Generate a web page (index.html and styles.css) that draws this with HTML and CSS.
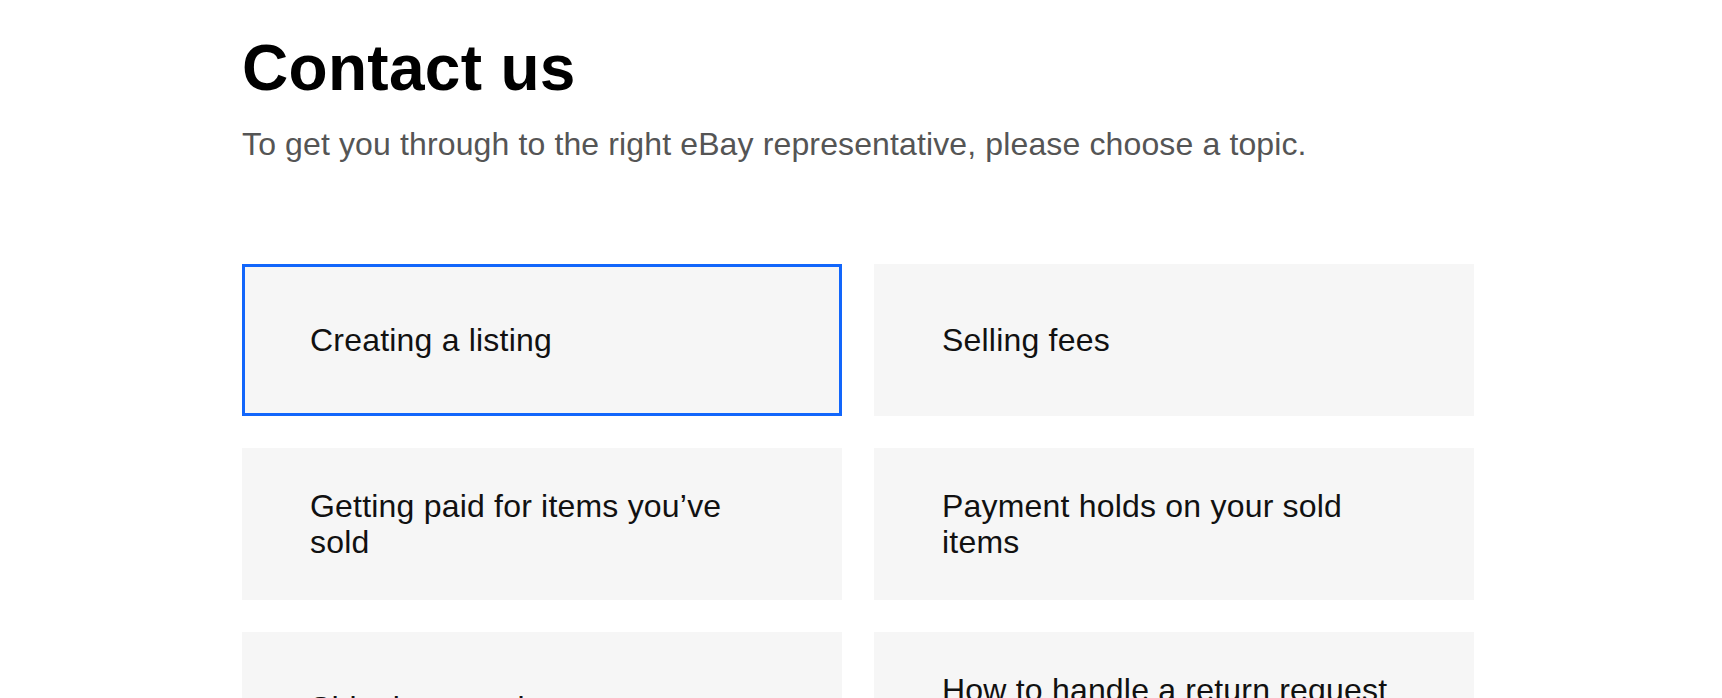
FILE: index.html
```html
<!DOCTYPE html>
<html lang="en">
<head>
<meta charset="utf-8">
<title>Contact us</title>
<link rel="stylesheet" href="styles.css">
</head>
<body>
<main class="page">
  <h1 class="title">Contact us</h1>
  <p class="subtitle">To get you through to the right eBay representative, please choose a topic.</p>
  <div class="topics">
    <button class="topic topic--focused">Creating a listing</button>
    <button class="topic">Selling fees</button>
    <button class="topic">Getting paid for items you’ve sold</button>
    <button class="topic">Payment holds on your sold items</button>
    <button class="topic">Shipping your item</button>
    <button class="topic">How to handle a return request from a buyer</button>
  </div>
</main>
</body>
</html>
```

FILE: styles.css
```css
html, body {
  margin: 0;
  padding: 0;
  background: #ffffff;
}

body {
  font-family: "Liberation Sans", Arial, Helvetica, sans-serif;
  color: #111111;
}

.page {
  width: 1232px;
  margin: 0 0 0 242px;
  padding-top: 32px;
}

.title {
  margin: 0;
  font-size: 64px;
  line-height: 72px;
  font-weight: 700;
  letter-spacing: 0.3px;
  color: #000000;
}

.subtitle {
  margin: 20px 0 0;
  font-size: 32px;
  line-height: 40px;
  letter-spacing: 0.13px;
  color: #555555;
}

.topics {
  margin-top: 100px;
  display: grid;
  grid-template-columns: repeat(2, 600px);
  gap: 32px;
}

.topic {
  box-sizing: border-box;
  height: 152px;
  display: flex;
  align-items: center;
  padding: 0 65px;
  border: 3px solid transparent;
  background: #f6f6f6;
  font-family: inherit;
  font-size: 32px;
  line-height: 36px;
  letter-spacing: 0.2px;
  color: #111111;
  text-align: left;
  cursor: pointer;
}

.topic--focused {
  border-color: #1266fb;
}
```
